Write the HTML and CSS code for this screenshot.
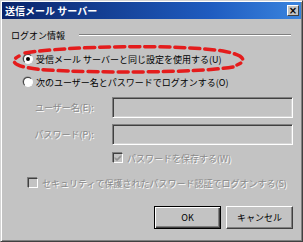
FILE: index.html
```html
<!DOCTYPE html>
<html lang="ja">

<head>
    <meta charset="UTF-8">
    <title>送信メール サーバー</title>
    <link rel="stylesheet" href="styles.css">
</head>

<body>
    <div class="window">
        <div class="titlebar">
            <span class="title">送信メール サーバー</span>
            <span class="close">×</span>
        </div>

        <div class="content">
            <div class="group-head">
                <span class="group-label">ログオン情報</span>
                <span class="group-line"></span>
            </div>

            <div class="radio-row first">
                <span class="radio checked"></span>
                <span class="text">受信メール サーバーと同じ設定を使用する(U)</span>
            </div>
            <div class="radio-row second">
                <span class="radio"></span>
                <span class="text">次のユーザー名とパスワードでログオンする(O)</span>
            </div>

            <div class="field-row user">
                <span class="field-label disabled">ユーザー名(E):</span>
                <span class="field"></span>
            </div>
            <div class="field-row pass">
                <span class="field-label disabled">パスワード(P):</span>
                <span class="field"></span>
            </div>

            <div class="check-row save">
                <span class="check">
                    <svg width="8" height="8" viewBox="0 0 8 8">
                        <path d="M1 3.5 L3 5.5 L7 1.5 M1 4.5 L3 6.5 L7 2.5" stroke="#808080" stroke-width="1" fill="none" />
                    </svg>
                </span>
                <span class="text disabled">パスワードを保存する(W)</span>
            </div>
            <div class="check-row secure">
                <span class="check"></span>
                <span class="text disabled">セキュリティで保護されたパスワード認証でログオンする(S)</span>
            </div>

            <div class="buttons">
                <span class="button default">OK</span>
                <span class="button">キャンセル</span>
            </div>
        </div>

        <!-- red marker drawn over the first option -->
        <svg class="marker" width="250" height="32" viewBox="0 0 250 32">
            <path d="M18 8 C60 1 170 -1 216 6 C238 10 240 16 230 20 M226 22 C190 28 90 28 40 25 C10 23 0 17 12 11"
                fill="none" stroke="#e41c1c" stroke-width="3.5" stroke-dasharray="10 5" stroke-linecap="round" />
        </svg>
    </div>
</body>

</html>
```

FILE: styles.css
```css
body {
    margin: 0;
    padding: 0;
    background: #c3c3c3;
    font-family: "Noto Sans CJK JP", sans-serif;
    font-size: 9px;
}

.window {
    position: relative;
    box-sizing: border-box;
    width: 303px;
    height: 242px;
    background: #c3c3c3;
    border-top: 1px solid #d4d4d4;
    border-left: 1px solid #d4d4d4;
    border-right: 1px solid #404040;
    border-bottom: 1px solid #404040;
    box-shadow: inset 1px 1px #ffffff, inset -1px -1px #808080;
    padding: 1px;
}

.titlebar {
    height: 17px;
    display: flex;
    align-items: center;
    justify-content: space-between;
    padding: 0 2px 0 3px;
    background: linear-gradient(to right, #0a246a, #1f5cc0 70%, #3a84de);
}

.title {
    color: #ffffff;
    font-weight: bold;
    font-size: 10px;
}

.close {
    box-sizing: border-box;
    width: 12px;
    height: 11px;
    display: flex;
    align-items: center;
    justify-content: center;
    background: #c3c3c3;
    border-top: 1px solid #ffffff;
    border-left: 1px solid #ffffff;
    border-right: 1px solid #404040;
    border-bottom: 1px solid #404040;
    font-family: "DejaVu Sans", sans-serif;
    font-weight: bold;
    font-size: 10px;
    line-height: 1;
    color: #000000;
}

.content {
    display: flex;
    flex-direction: column;
    padding: 0 8px 0 8px;
}

.group-head {
    display: flex;
    align-items: center;
    height: 12px;
    margin-top: 10px;
    padding-left: 1px;
}

.group-line {
    flex: 1;
    height: 0;
    border-top: 1px solid #808080;
    border-bottom: 1px solid #ffffff;
    margin: 0 2px 0 14px;
}

.radio-row,
.check-row {
    display: flex;
    align-items: center;
    height: 14px;
}

.radio-row {
    padding-left: 13px;
}

.radio-row.first {
    margin-top: 11px;
}

.radio-row.second {
    margin-top: 9px;
}

.radio {
    position: relative;
    box-sizing: border-box;
    width: 10px;
    height: 10px;
    border-radius: 50%;
    background: #ffffff;
    border: 1px solid;
    border-color: #404040 #ffffff #ffffff #404040;
    box-shadow: -0.5px -0.5px 0 #808080;
    margin-right: 3px;
}

.radio.checked::after {
    content: "";
    position: absolute;
    left: 2px;
    top: 2px;
    width: 4px;
    height: 4px;
    border-radius: 50%;
    background: #000000;
}

.field-row {
    display: flex;
    align-items: center;
}

.field-row.user {
    margin-top: 8px;
}

.field-row.pass {
    margin-top: 6px;
}

.field-label {
    width: 84px;
    text-align: right;
    margin-right: 18px;
}

.field {
    box-sizing: border-box;
    width: 182px;
    height: 21px;
    background: #c3c3c3;
    border-top: 1px solid #808080;
    border-left: 1px solid #808080;
    border-right: 1px solid #ffffff;
    border-bottom: 1px solid #ffffff;
    box-shadow: inset 1px 1px #404040, inset -1px -1px #d4d4d4;
}

.disabled {
    color: #8a8a8a;
    text-shadow: 1px 1px 0 #ffffff;
}

.check {
    box-sizing: border-box;
    width: 10px;
    height: 10px;
    display: flex;
    align-items: center;
    justify-content: center;
    background: #c3c3c3;
    border-top: 1px solid #404040;
    border-left: 1px solid #404040;
    border-right: 1px solid #ffffff;
    border-bottom: 1px solid #ffffff;
    box-shadow: -1px -1px 0 #808080;
    margin-right: 4px;
}

.check-row.save {
    margin-top: 6px;
    padding-left: 103px;
}

.check-row.secure {
    margin-top: 11px;
    padding-left: 18px;
}

.buttons {
    display: flex;
    justify-content: flex-end;
    gap: 5px;
    margin-top: 16px;
    padding-right: 0;
}

.button {
    box-sizing: border-box;
    width: 67px;
    height: 23px;
    display: flex;
    align-items: center;
    justify-content: center;
    background: #c3c3c3;
    color: #000000;
    border-top: 1px solid #ffffff;
    border-left: 1px solid #ffffff;
    border-right: 1px solid #404040;
    border-bottom: 1px solid #404040;
    box-shadow: inset -1px -1px #808080;
}

.button.default {
    border: 1px solid #000000;
    box-shadow: inset 1px 1px #ffffff, inset -1px -1px #404040, inset -2px -2px #808080;
}

.marker {
    position: absolute;
    left: 6px;
    top: 44px;
}
```
